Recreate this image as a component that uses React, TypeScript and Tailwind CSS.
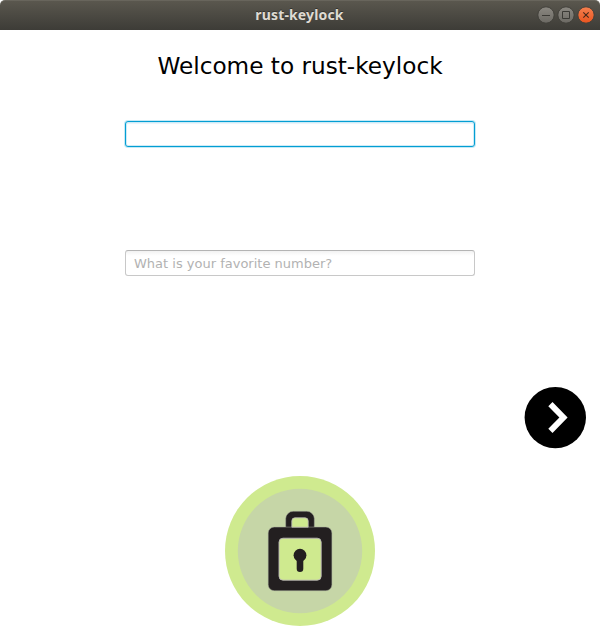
import React from "react";

function TitleBar() {
  return (
    <header className="relative flex h-[30px] items-center justify-center rounded-t-[5px] border-t border-[#68655c] bg-linear-to-b from-[#5a574e] to-[#3d3c37]">
      <h1 className="pb-[2px] pr-px font-['Noto_Sans',sans-serif] text-[14px] leading-[27px] font-bold tracking-[0.15px] text-[#dfdbd2] [text-shadow:0_-1px_0_#33322e]">
        rust-keylock
      </h1>
      <svg className="absolute top-[4px] right-[4px]" width="60" height="20" viewBox="0 0 60 20" fill="none">
        <defs>
          <linearGradient id="grey" x1="0" y1="0" x2="0" y2="1">
            <stop offset="0" stopColor="#8b8881" />
            <stop offset="1" stopColor="#6b6963" />
          </linearGradient>
          <linearGradient id="orange" x1="0" y1="0" x2="0" y2="1">
            <stop offset="0" stopColor="#f5804f" />
            <stop offset="1" stopColor="#e9541f" />
          </linearGradient>
        </defs>
        <circle cx="10" cy="10" r="8.2" fill="url(#grey)" stroke="#403f39" />
        <circle cx="30" cy="10" r="8.2" fill="url(#grey)" stroke="#403f39" />
        <circle cx="50" cy="10" r="8.2" fill="url(#orange)" stroke="#403f39" />
        <path d="M6 10.5h8M26.5 6.5h7v7h-7z" stroke="#3b3a35" />
        <path d="M47.3 7.3l5.4 5.4M52.7 7.3l-5.4 5.4" stroke="#45281a" strokeWidth="1.1" />
      </svg>
    </header>
  );
}

function NextButton() {
  return (
    <button aria-label="Next" className="mr-[13px] block">
      <svg width="63" height="63" viewBox="524 386 63 63">
        <circle cx="555.3" cy="417.6" r="30.7" fill="#000" />
        <path d="M548.3 406.2L552.5 402.1 567.6 417.5 552.5 432.9 548.3 428.8 559.4 417.5z" fill="#fff" />
      </svg>
    </button>
  );
}

function LockLogo() {
  return (
    <svg width="150" height="150" viewBox="225 476 150 150">
      <circle cx="300" cy="551" r="75" fill="#cfea8f" />
      <circle cx="300" cy="551" r="62.2" fill="#c6d6a7" />
      <path
        d="M285.7 530V518.5a7.5 7.5 0 0 1 7.5-7.2h13.6a7.5 7.5 0 0 1 7.5 7.2V530z"
        fill="#231f20"
        stroke="#a5a99b"
        strokeWidth="0.5"
      />
      <rect x="268.2" y="527.1" width="63.7" height="63.6" rx="6" fill="#231f20" stroke="#a5a99b" strokeWidth="0.5" />
      <path d="M291.8 527.2V521a3.2 3.2 0 0 1 3.2-3.2h10a3.2 3.2 0 0 1 3.2 3.2v6.2z" fill="#cfea8f" stroke="#bbb5b9" strokeWidth="0.8" />
      <rect x="279" y="538.2" width="42.2" height="42" rx="4" fill="#cfea8f" stroke="#bbb5b9" strokeWidth="0.9" />
      <circle cx="300" cy="555.2" r="6.4" fill="#231f20" />
      <path d="M295.8 558h8.4l-.9 3v7.7a3.3 3.3 0 0 1-6.6 0V561z" fill="#231f20" />
    </svg>
  );
}

export default function App() {
  return (
    <div className="flex h-[636px] w-[600px] flex-col overflow-hidden bg-white font-['DejaVu_Sans',sans-serif]">
      <TitleBar />
      <main className="flex flex-col items-center">
        <h2 className="mt-[22px] h-7 text-[23.2px] leading-7 whitespace-nowrap text-black">Welcome to rust-keylock</h2>
        <input
          type="password"
          aria-label="Password"
          className="mt-[41px] h-[26px] w-[350px] rounded-[3px] border border-[#039ed3] bg-white px-2 shadow-[0_0_0_1px_#c5eaf6,inset_0_0_0_1px_#cdebf7,inset_0_2px_1px_#e8f3fa] outline-none"
        />
        <input
          type="text"
          placeholder="What is your favorite number?"
          className="mt-[103px] h-[26px] w-[350px] rounded-[3px] border border-[#c8c8c8] border-t-[#b4b4b4] bg-linear-to-b from-[#f2f2f2] to-white to-20% px-2 text-[13px] text-black outline-none placeholder:text-[#b2b2b2]"
        />
        <div className="mt-[110px] flex w-full justify-end">
          <NextButton />
        </div>
        <div className="mt-[27px]">
          <LockLogo />
        </div>
      </main>
    </div>
  );
}
